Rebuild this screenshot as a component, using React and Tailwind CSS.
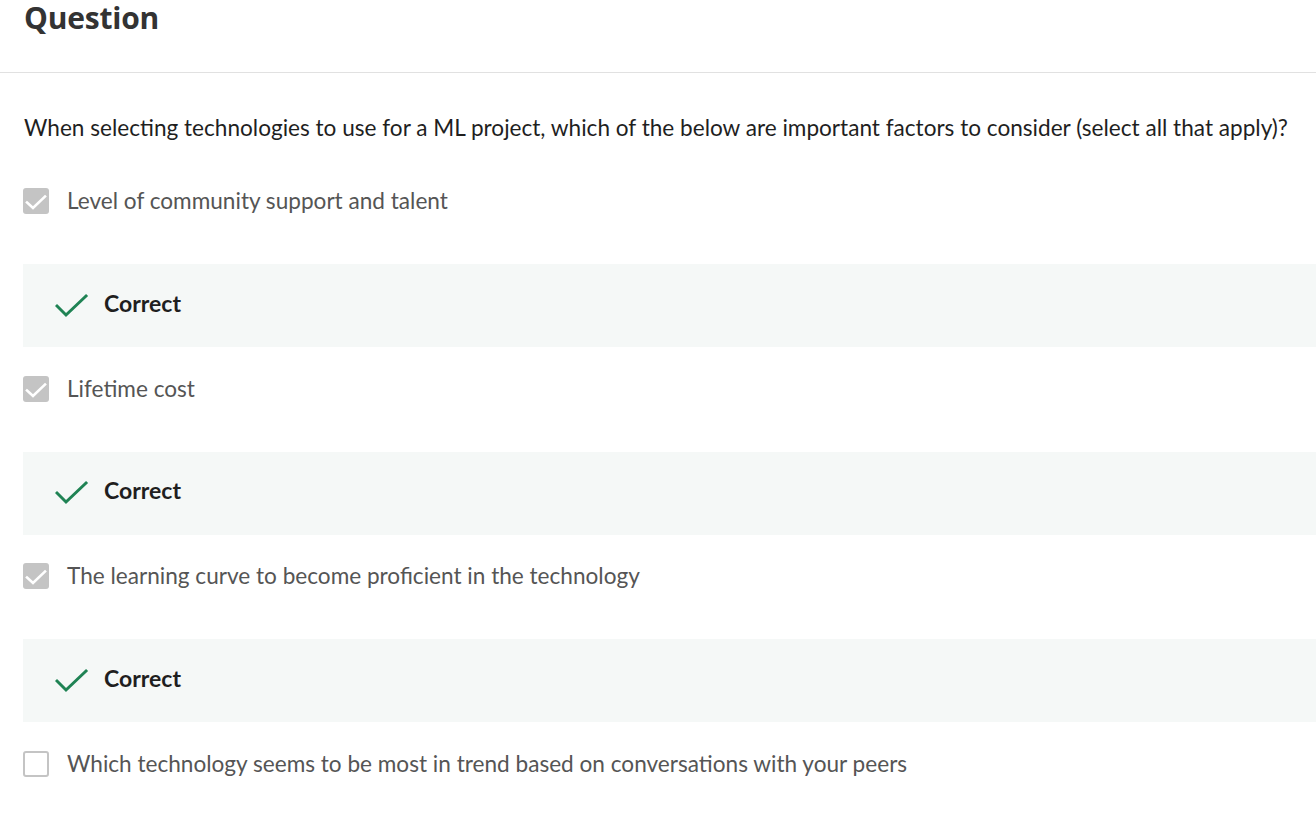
import React from 'react';

const options = [
  { text: 'Level of community support and talent', checked: true, correct: true },
  { text: 'Lifetime cost', checked: true, correct: true },
  { text: 'The learning curve to become proficient in the technology', checked: true, correct: true },
  { text: 'Which technology seems to be most in trend based on conversations with your peers', checked: false, correct: false },
];

const CheckBox = ({ checked }) =>
  checked ? (
    <div className="w-[26px] h-[26px] rounded-[3px] bg-[#c4c4c4] shrink-0">
      <svg width="26" height="26" viewBox="0 0 26 26" fill="none">
        <path d="M4 14.5l6 5.5L22 8.5" stroke="white" strokeWidth="2.6" strokeLinecap="square" strokeLinejoin="miter" />
      </svg>
    </div>
  ) : (
    <div className="w-[26px] h-[26px] rounded-[3px] border-2 border-[#c4c4c4] bg-white shrink-0" />
  );

const Feedback = () => (
  <div className="mt-[50px] mb-[28.5px] h-[83px] bg-[#f5f8f7] flex items-center pl-[32px]">
    <svg width="34" height="26" viewBox="0 0 34 26" fill="none">
      <path d="M2 13l9 9L31 3" stroke="#1f8354" strokeWidth="3" strokeLinecap="square" strokeLinejoin="miter" />
    </svg>
    <span className="ml-[15px] pb-[5px] text-[23px] font-bold text-[#1f1f1f]">Correct</span>
  </div>
);

export default function App() {
  return (
    <div className="min-h-screen bg-white font-['Lato','Noto_Sans',sans-serif] overflow-hidden">
      <div className="h-[73px] border-b border-[#e1e1e1] pl-[24px] flex items-start">
        <h1 className="text-[30px] leading-[36px] font-bold text-[#333] font-['Open_Sans',sans-serif] tracking-[-0.2px]">Question</h1>
      </div>
      <div className="pl-[23px]">
        <p className="mt-[40px] text-[22.6px] leading-[30px] text-[#1f1f1f] whitespace-nowrap pl-[1px]">
          When selecting technologies to use for a ML project, which of the below are important factors to consider (select all that apply)?
        </p>
        <div className="mt-[45px]">
          {options.map((o, i) => (
            <div key={i}>
              <div className="flex items-center gap-[18px]">
                <CheckBox checked={o.checked} />
                <span className="text-[22.6px] leading-[26px] text-[#555]">{o.text}</span>
              </div>
              {o.correct && <Feedback />}
            </div>
          ))}
        </div>
      </div>
    </div>
  );
}
